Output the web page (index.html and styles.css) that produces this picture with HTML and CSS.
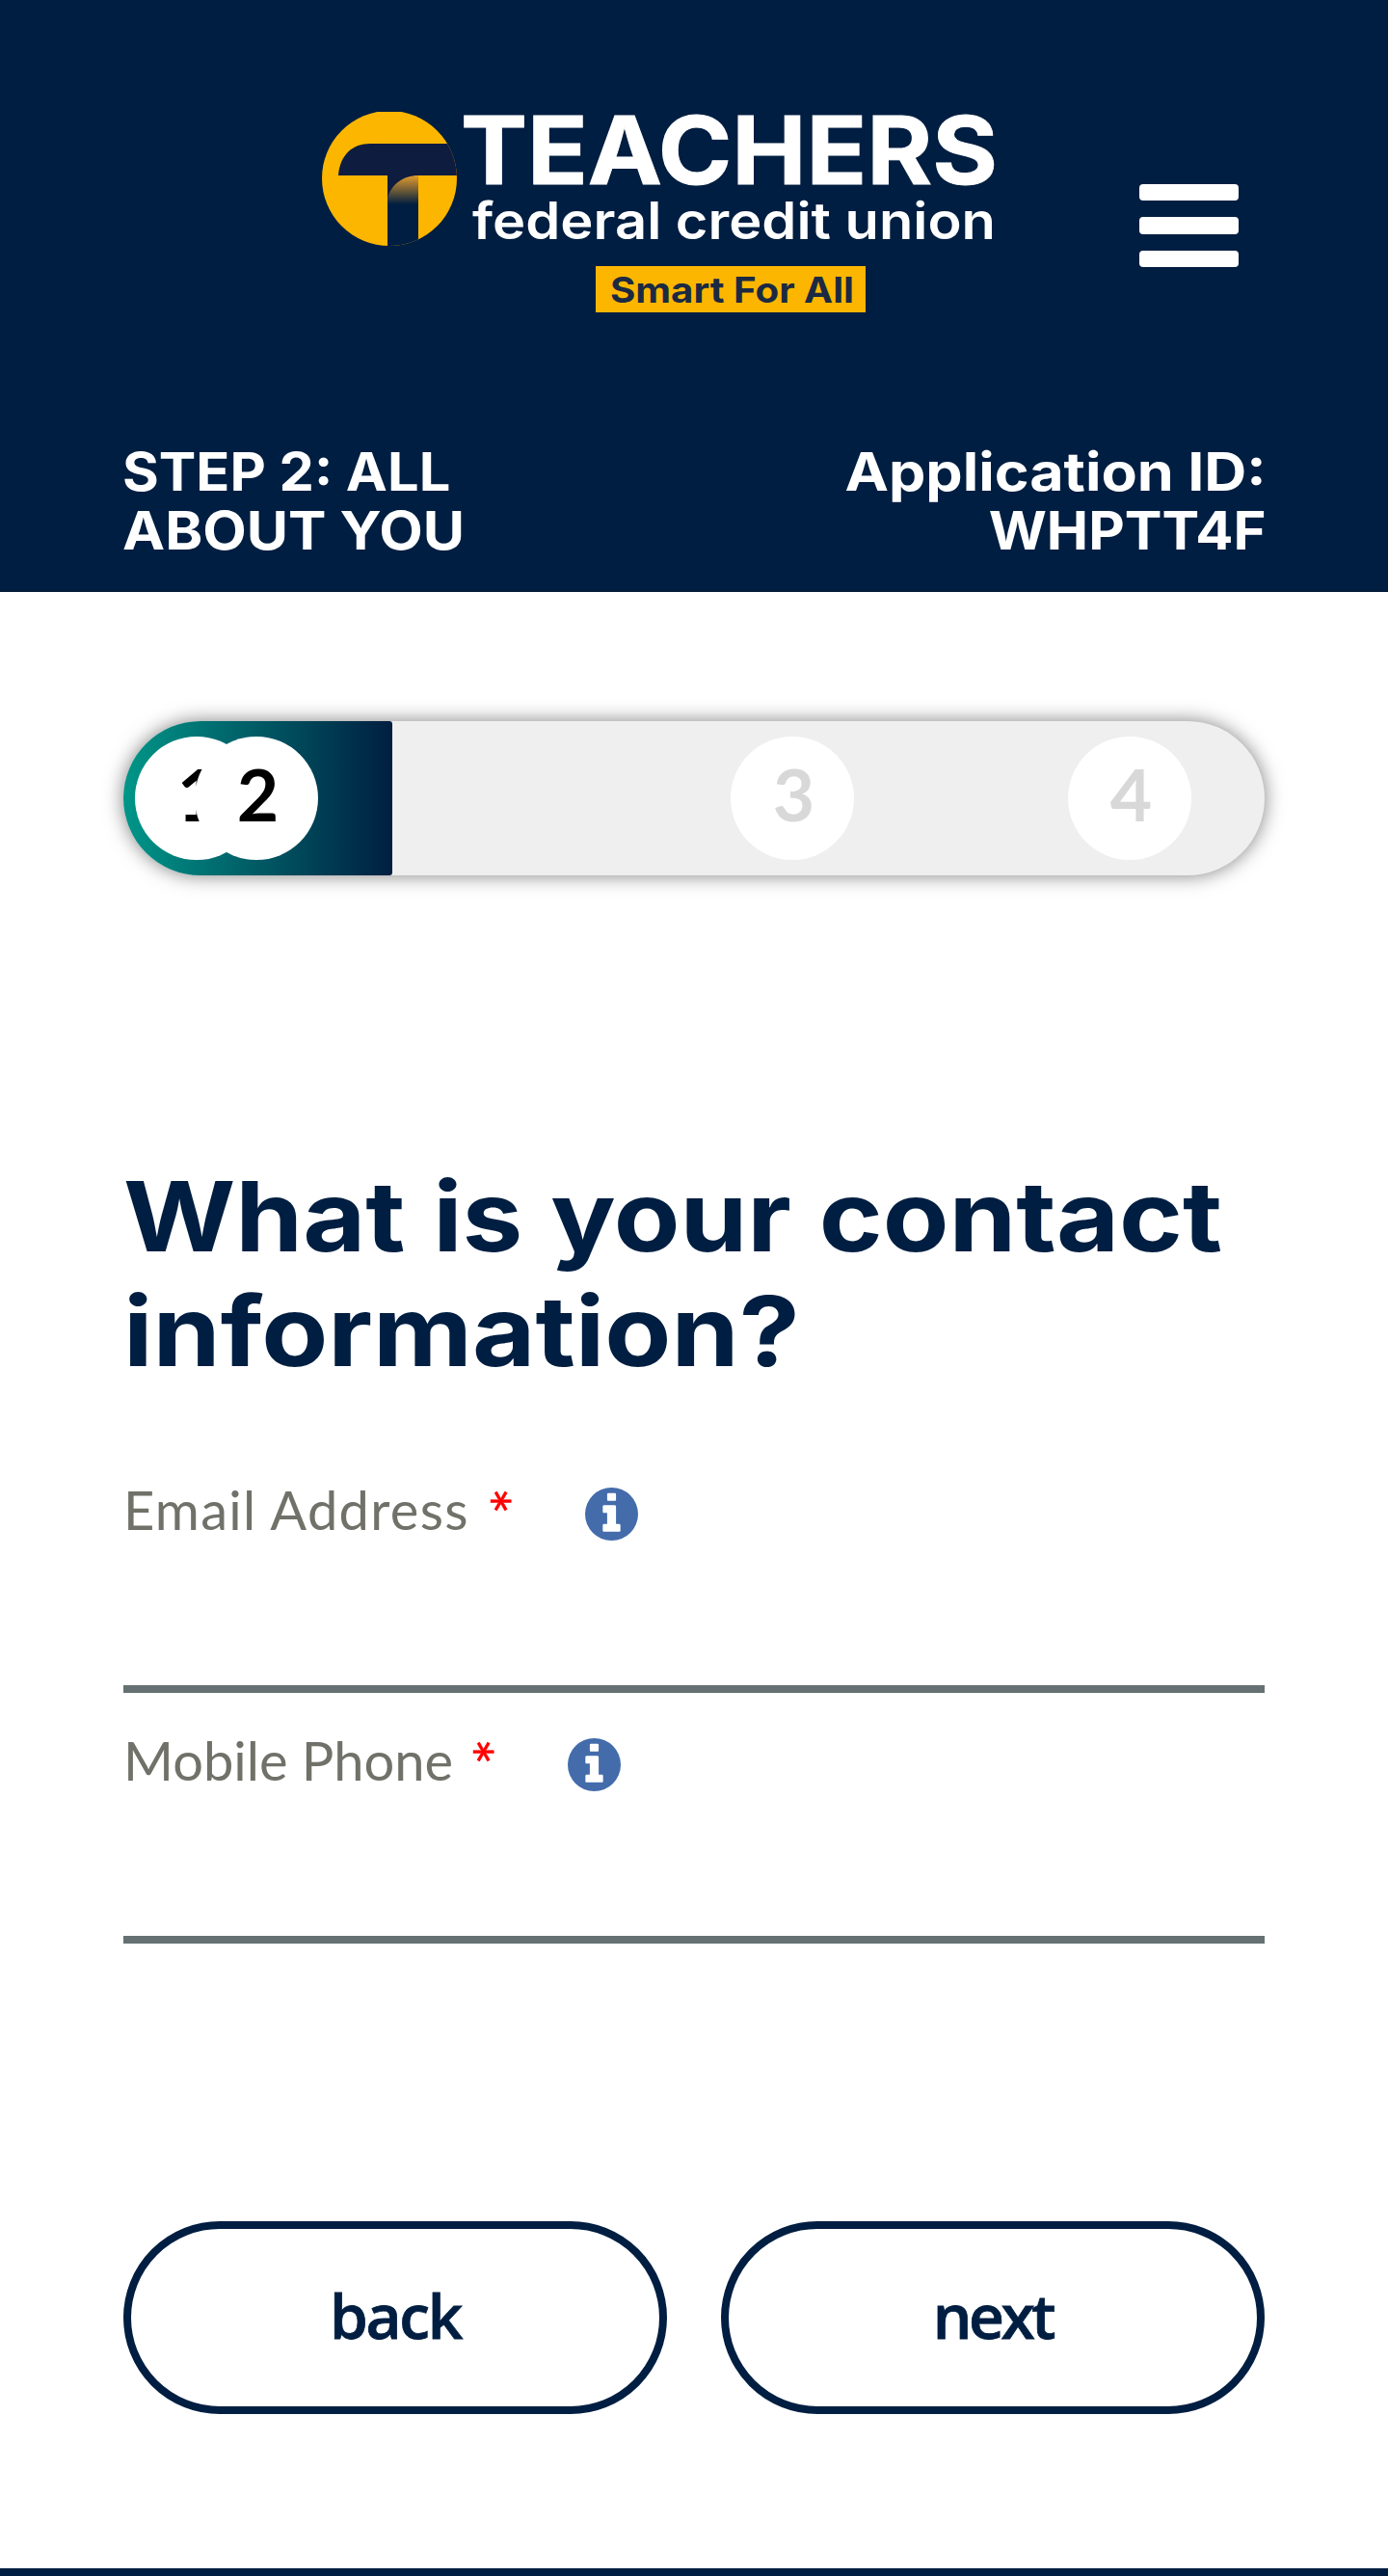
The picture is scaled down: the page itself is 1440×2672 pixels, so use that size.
FILE: index.html
```html
<!DOCTYPE html>
<html lang="en">
<head>
<meta charset="utf-8">
<title>Teachers Federal Credit Union - All About You</title>
<link rel="stylesheet" href="styles.css">
</head>
<body>
<header class="header">
  <div class="brand-row">
    <svg class="logo" viewBox="0 0 700 208" role="img" aria-label="Teachers federal credit union">
      <defs>
        <clipPath id="disc"><circle cx="70" cy="69" r="70"/></clipPath>
        <linearGradient id="fade" x1="0" y1="0" x2="0" y2="1">
          <stop offset="0" stop-color="#e39c2c"/>
          <stop offset="1" stop-color="#001e41"/>
        </linearGradient>
      </defs>
      <g clip-path="url(#disc)">
        <rect width="140" height="140" fill="#fdb600"/>
        <path d="M68 66h32v75H68z" fill="#001e41"/>
        <path d="M68 66h32v30H68z" fill="url(#fade)"/>
        <path d="M17 66C19 44 32 33 50 33H140V66H100C84 66 72 75 68 90V66Z" fill="#0e1c40"/>
      </g>
      <text class="logo-name" x="144" y="75" textLength="557" lengthAdjust="spacingAndGlyphs">TEACHERS</text>
      <text class="logo-sub" x="156" y="132" textLength="543" lengthAdjust="spacingAndGlyphs">federal credit union</text>
      <rect x="284" y="160" width="280" height="48" fill="#fdb600"/>
      <text class="logo-tag" x="299" y="198" textLength="253" lengthAdjust="spacingAndGlyphs">Smart For All</text>
    </svg>
    <div class="menu"><i></i><i></i><i></i></div>
  </div>
  <div class="status-row">
    <div class="step"><span class="step-a">STEP 2: ALL</span><span class="step-b">ABOUT YOU</span></div>
    <div class="app-id"><span class="app-a">Application ID:</span><span class="app-b">WHPTT4F</span></div>
  </div>
</header>
<main class="main">
  <div class="progress">
    <div class="fill"></div>
    <span class="dot dot-1">1</span>
    <span class="dot dot-2">2</span>
    <span class="dot dot-3">3</span>
    <span class="dot dot-4">4</span>
  </div>
  <h1 class="title"><span class="title-a">What is your contact</span><span class="title-b">information?</span></h1>
  <div class="field">
    <div class="label-row">
      <label class="label label-email" for="email">Email Address</label><span class="star">*</span>
      <svg class="info" viewBox="0 0 1536 1536"><circle cx="768" cy="768" r="768"/><path d="M1024 1248v-160q0-14-9-23t-23-9h-96v-512q0-14-9-23t-23-9h-320q-14 0-23 9t-9 23v160q0 14 9 23t23 9h96v320h-96q-14 0-23 9t-9 23v160q0 14 9 23t23 9h448q14 0 23-9t9-23zM896 352v-160q0-14-9-23t-23-9h-192q-14 0-23 9t-9 23v160q0 14 9 23t23 9h192q14 0 23-9t9-23z"/></svg>
    </div>
    <input class="input" id="email" type="text">
  </div>
  <div class="field">
    <div class="label-row">
      <label class="label label-phone" for="phone">Mobile Phone</label><span class="star">*</span>
      <svg class="info" viewBox="0 0 1536 1536"><circle cx="768" cy="768" r="768"/><path d="M1024 1248v-160q0-14-9-23t-23-9h-96v-512q0-14-9-23t-23-9h-320q-14 0-23 9t-9 23v160q0 14 9 23t23 9h96v320h-96q-14 0-23 9t-9 23v160q0 14 9 23t23 9h448q14 0 23-9t9-23zM896 352v-160q0-14-9-23t-23-9h-192q-14 0-23 9t-9 23v160q0 14 9 23t23 9h192q14 0 23-9t9-23z"/></svg>
    </div>
    <input class="input" id="phone" type="text">
  </div>
  <div class="actions">
    <button class="btn btn-back" type="button">back</button>
    <button class="btn btn-next" type="button">next</button>
  </div>
</main>
<footer class="footer"></footer>
</body>
</html>
```
FILE: styles.css
```css
* { box-sizing: border-box; }
body { margin: 0; background: #fff; font-family: Lato, "Open Sans", sans-serif; }

.header { height: 614px; padding: 116px 128px 0; background: #001e41; color: #fff; border-bottom: 1px solid #00152f; }
.brand-row { display: flex; height: 343px; padding-left: 206px; gap: 148px; }
.logo { width: 700px; height: 208px; flex: none; overflow: visible; }
.logo text { font-family: Inter, sans-serif; fill: #fff; }
.logo .logo-name { font-size: 98px; font-weight: 700; stroke: #fff; stroke-width: 1px; }
.logo .logo-sub { font-size: 53px; font-weight: 600; }
.logo .logo-tag { font-size: 37px; font-weight: 700; fill: #1b2a42; }
.menu { display: flex; flex-direction: column; gap: 17px; padding-top: 75px; }
.menu i { width: 103px; height: 17.4px; border-radius: 4px; background: #fff; }

.status-row { display: flex; justify-content: space-between; margin: 0 -2px 0 -1px; font: 700 55px/61px Inter, sans-serif; }
.status-row span { display: block; white-space: nowrap; transform-origin: left; }
.app-id { text-align: right; }
.status-row .app-id span { transform-origin: right; }
.step-a { transform: scaleX(1.05); }
.step-b { transform: scaleX(1.075); }
.app-a { transform: scaleX(1.108); }
.app-b { transform: scaleX(1.055); }

.main { padding: 134px 128px 0; height: 2050px; }
.progress { position: relative; height: 160px; border-radius: 80px; background: #efefef; box-shadow: 0 0 20px rgba(0, 0, 0, .5); }
.fill { width: 279px; height: 160px; border-radius: 80px 3px 3px 80px; background: linear-gradient(90deg, #009688, #001e41); }
.dot { position: absolute; top: 16px; width: 128px; height: 128px; padding-left: 3px; border-radius: 50%; background: #fff; color: #d8d8d8; font: 700 75px/118px Lato, sans-serif; text-align: center; }
.dot-1 { left: 12px; color: #000; }
.dot-2 { left: 74px; color: #000; }
.dot-3 { left: 630px; }
.dot-4 { left: 980px; }

.title { margin: 294px 0 90px; color: #001e41; font: 700 100.5px/119px Inter, sans-serif; }
.title span { display: block; white-space: nowrap; transform: scaleX(1.122); transform-origin: left; }
.title .title-a { word-spacing: 2px; transform: scaleX(1.116); }

.field { height: 226px; margin-bottom: 34px; }
.label-row { display: flex; height: 68px; line-height: 71px; font-size: 56px; color: #707269; }
.label { white-space: nowrap; }
.label-email { width: 377px; letter-spacing: 1.3px; }
.label-phone { width: 359px; }
.star { width: 26px; color: #f00; font-size: 66px; -webkit-text-stroke: .4px #f00; transform: translate(1px, 4px) rotate(90deg); transform-origin: 13px 22px; }
.info { width: 55px; height: 55px; margin: 13px 0 0 76px; fill: #446cab; }
.info path { fill: #fff; }
.input { display: block; width: 100%; height: 158px; padding: 0; border: 0; border-bottom: 8px solid #657172; background: transparent; font-size: 56px; }

.actions { display: flex; gap: 56px; margin-top: 288px; }
.btn { flex: 1; height: 200px; padding: 0 0 4px; border: 8px solid #001e41; border-radius: 100px; background: #fff; color: #001e41; font: 600 64px/80px "Open Sans", sans-serif; -webkit-text-stroke: .8px #001e41; }
.btn-back { letter-spacing: -2.4px; }
.btn-next { letter-spacing: -3.4px; }
.footer { height: 8px; background: #001e41; }
```
